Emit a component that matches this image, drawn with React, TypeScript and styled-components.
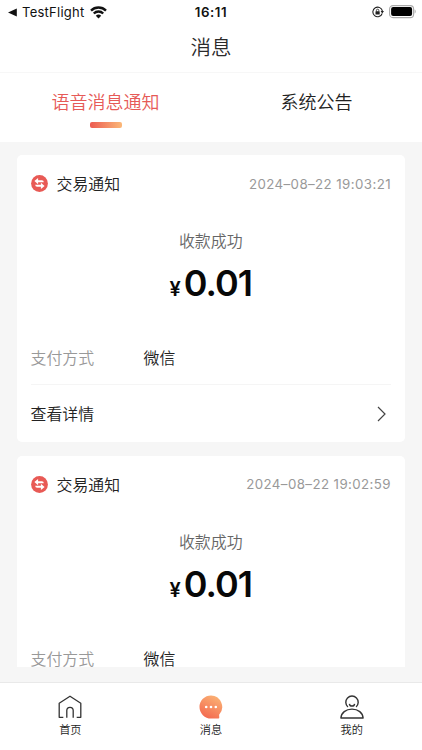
import React from 'react';
import styled, { createGlobalStyle } from 'styled-components';

const GlobalStyle = createGlobalStyle`
  * { box-sizing: border-box; }
  body {
    margin: 0;
    background: #fff;
    color: #2b2b2b;
    font-family: Inter, "Noto Sans CJK SC", sans-serif;
  }
  svg { display: block; flex: none; }
`;

const Screen = styled.div`
  width: 422px;
  height: 750px;
  display: flex;
  flex-direction: column;
  overflow: hidden;
  background: #fff;
`;

const StatusBar = styled.header`
  height: 24px;
  flex: none;
  display: grid;
  grid-template-columns: 1fr auto 1fr;
  align-items: center;
  padding: 0 6px 0 8px;
  color: #111;
`;

const StatusGroup = styled.div<{ $end?: boolean }>`
  display: flex;
  align-items: center;
  justify-content: ${p => (p.$end ? 'flex-end' : 'flex-start')};
  gap: 5px;
`;

const BackApp = styled.span`
  font-size: 13px;
  line-height: 24px;
  letter-spacing: 0.26px;
`;

const Clock = styled.span`
  font-size: 13.3px;
  line-height: 24px;
  font-weight: 600;
  letter-spacing: 0.55px;
  margin-right: 2px;
`;

const TitleBar = styled.h1`
  height: 49px;
  flex: none;
  margin: 0;
  padding-top: 1px;
  border-bottom: 1px solid #f7f7f7;
  text-align: center;
  font-size: 20.5px;
  font-weight: 350;
  line-height: 46px;
`;

const Tabs = styled.nav`
  height: 69px;
  flex: none;
  display: grid;
  grid-template-columns: 1fr 1fr;
`;

const Tab = styled.div<{ $active?: boolean }>`
  display: flex;
  flex-direction: column;
  align-items: center;
  padding-top: 16px;
  font-size: 18px;
  font-weight: 350;
  line-height: 28px;
  color: ${p => (p.$active ? '#e65a57' : '#222')};
`;

const TabMark = styled.span`
  width: 32px;
  height: 6px;
  margin-top: 5px;
  border-radius: 2px;
  background: linear-gradient(90deg, #ec5b51, #fbb878);
`;

const Feed = styled.main`
  flex: none;
  height: 540px;
  padding: 13px 17px 15px;
  background: #f6f6f6;
`;

const FeedClip = styled.div`
  height: 512px;
  overflow: hidden;
  display: flex;
  flex-direction: column;
  gap: 13.5px;
`;

const Card = styled.article`
  height: 287px;
  flex: none;
  padding: 0 14px 0 13.5px;
  border-radius: 5px;
  background: #fff;
`;

const CardHeader = styled.div`
  height: 57px;
  display: flex;
  align-items: center;
`;

const CardTitle = styled.span`
  margin: 3px 0 0 9px;
  font-size: 15.9px;
  font-weight: 350;
  line-height: 24px;
  color: #222;
`;

const Stamp = styled.time`
  margin-left: auto;
  font-size: 13.3px;
  letter-spacing: 0.41px;
  color: #999;
`;

const Summary = styled.div`
  height: 135px;
  padding-top: 18px;
  text-align: center;
`;

const Result = styled.div`
  font-size: 15.9px;
  font-weight: 350;
  line-height: 24px;
  color: #666;
`;

const Amount = styled.div`
  display: flex;
  justify-content: center;
  align-items: baseline;
  gap: 3px;
  margin-top: 6px;
  line-height: 46px;
  color: #080808;
`;

const Currency = styled.span`
  font-size: 20px;
  font-weight: 600;
`;

const Figure = styled.span`
  font-size: 36px;
  font-weight: 600;
  letter-spacing: -1px;
`;

const Detail = styled.div`
  height: 38px;
  display: flex;
  font-size: 15.9px;
  font-weight: 350;
  line-height: 24px;
  color: #222;
  border-bottom: 1px solid #f5f5f5;
`;

const DetailLabel = styled.span`
  width: 113px;
  color: #999;
`;

const More = styled.div`
  height: 57px;
  display: flex;
  align-items: center;
  justify-content: space-between;
  padding-right: 5px;
  font-size: 15.9px;
  font-weight: 350;
  color: #222;
`;

const BottomNav = styled.footer`
  flex: 1;
  display: grid;
  grid-template-columns: repeat(3, 1fr);
  border-top: 1px solid #e9e9e9;
`;

const NavItem = styled.div`
  display: flex;
  flex-direction: column;
  align-items: center;
  padding-top: 12px;
  gap: 2px;
`;

const NavLabel = styled.span`
  font-size: 11.2px;
  line-height: 18px;
  font-weight: 350;
  color: #222;
`;

const BackTriangle = () => (
  <svg width="9" height="9" viewBox="0 0 9 9"><path d="M0 4.5 8.8.4v8.2z" fill="#111" /></svg>
);

const Wifi = () => (
  <svg width="17" height="13" viewBox="0 0 17 13" fill="none" stroke="#111" strokeWidth="2.4">
    <path d="M1 4.6a10.7 10.7 0 0 1 15 0" />
    <path d="M3.8 7.5a6.7 6.7 0 0 1 9.4 0" />
    <path d="M8.5 12.6 5.8 9.8a3.9 3.9 0 0 1 5.4 0z" fill="#111" stroke="none" />
  </svg>
);

const RotationLock = () => (
  <svg width="12" height="12" viewBox="0 0 12 12" fill="none" stroke="#222">
    <path d="M10.2 7.5A4.8 4.8 0 1 1 10.4 5.2" strokeWidth="1.1" />
    <path d="M8.6 5h3.4l-1.7 2.4z" fill="#222" stroke="none" />
    <rect x="3.5" y="5.3" width="4.2" height="3.2" rx=".5" fill="#222" stroke="none" />
    <path d="M4.4 5.5V4.4a1.2 1.2 0 0 1 2.4 0v1.1" strokeWidth=".8" />
  </svg>
);

const Battery = () => (
  <svg width="27" height="14" viewBox="0 0 27 14">
    <rect x=".6" y=".6" width="24" height="12" rx="3.4" fill="#fff" stroke="#aaa" strokeWidth="1.1" />
    <rect x="2.1" y="2.1" width="21" height="9" rx="2" fill="#000" />
    <path d="M25.6 4.5c1.5.7 1.5 3.3 0 4z" fill="#aaa" />
  </svg>
);

const TransferIcon = () => (
  <svg width="17" height="17" viewBox="0 0 17 17">
    <circle cx="8.5" cy="8.5" r="8.4" fill="#e85a55" />
    <path d="M3.4 6.1 7.1 2.9v2.3h3.8q1.9 0 1.9 2.1H7.1v1.9z" fill="#fff" />
    <path d="M13.6 10.9 9.9 14.1v-2.3H6.1q-1.9 0-1.9-2.1h5.7V7.8z" fill="#fff" />
  </svg>
);

const Chevron = () => (
  <svg width="9" height="16" viewBox="0 0 9 16" fill="none" stroke="#444" strokeWidth="1.2">
    <path d="m1 1 7 7-7 7" />
  </svg>
);

const HomeIcon = () => (
  <svg width="24" height="24" viewBox="0 0 24 24" fill="none" stroke="#333" strokeWidth="1.3" strokeLinejoin="round">
    <path d="M5.3 22.3H1.2V8.2L12 1.2l10.8 7v14.1h-4.1" />
    <path d="M8.8 22.8V15.5a3.2 3.2 0 0 1 6.4 0v7.3" />
  </svg>
);

const MessageIcon = () => (
  <svg width="24" height="24" viewBox="0 0 24 24">
    <defs>
      <linearGradient id="bubble" x1=".8" y1="0" x2=".3" y2="1">
        <stop offset="0" stopColor="#fbb476" />
        <stop offset="1" stopColor="#f3694f" />
      </linearGradient>
    </defs>
    <path d="M12 .5a11.5 11.5 0 1 0 0 23h7.4a.9.9 0 0 0 .9-.9l-.2-2.8A11.5 11.5 0 0 0 12 .5z" fill="url(#bubble)" />
    <g fill="#fff"><circle cx="7.2" cy="12" r="1.3" /><circle cx="12" cy="12" r="1.3" /><circle cx="16.8" cy="12" r="1.3" /></g>
  </svg>
);

const ProfileIcon = () => (
  <svg width="24" height="24" viewBox="0 0 24 24" fill="none" stroke="#333" strokeWidth="1.4" strokeLinejoin="round">
    <path d="M7.9 11.9a6.2 6.2 0 1 1 8.2 0" />
    <path d="M9.4 8.8c.4 3 4.8 3 5.2 0" />
    <path d="M.9 23c.3-5.1 4.9-8.9 11.1-8.9S22.8 17.9 23.1 23z" />
  </svg>
);

type Notice = { time: string; hasMore: boolean };

const notices: Notice[] = [
  { time: '2024–08–22 19:03:21', hasMore: true },
  { time: '2024–08–22 19:02:59', hasMore: false },
];

const NoticeCard = ({ time, hasMore }: Notice) => (
  <Card>
    <CardHeader>
      <TransferIcon />
      <CardTitle>交易通知</CardTitle>
      <Stamp>{time}</Stamp>
    </CardHeader>
    <Summary>
      <Result>收款成功</Result>
      <Amount><Currency>¥</Currency><Figure>0.01</Figure></Amount>
    </Summary>
    <Detail><DetailLabel>支付方式</DetailLabel><span>微信</span></Detail>
    {hasMore && <More><span>查看详情</span><Chevron /></More>}
  </Card>
);

export default function App() {
  return (
    <>
      <GlobalStyle />
      <Screen>
        <StatusBar>
          <StatusGroup><BackTriangle /><BackApp>TestFlight</BackApp><Wifi /></StatusGroup>
          <Clock>16:11</Clock>
          <StatusGroup $end><RotationLock /><Battery /></StatusGroup>
        </StatusBar>
        <TitleBar>消息</TitleBar>
        <Tabs>
          <Tab $active>语音消息通知<TabMark /></Tab>
          <Tab>系统公告</Tab>
        </Tabs>
        <Feed>
          <FeedClip>
            {notices.map(n => <NoticeCard key={n.time} {...n} />)}
          </FeedClip>
        </Feed>
        <BottomNav>
          <NavItem><HomeIcon /><NavLabel>首页</NavLabel></NavItem>
          <NavItem><MessageIcon /><NavLabel>消息</NavLabel></NavItem>
          <NavItem><ProfileIcon /><NavLabel>我的</NavLabel></NavItem>
        </BottomNav>
      </Screen>
    </>
  );
}
